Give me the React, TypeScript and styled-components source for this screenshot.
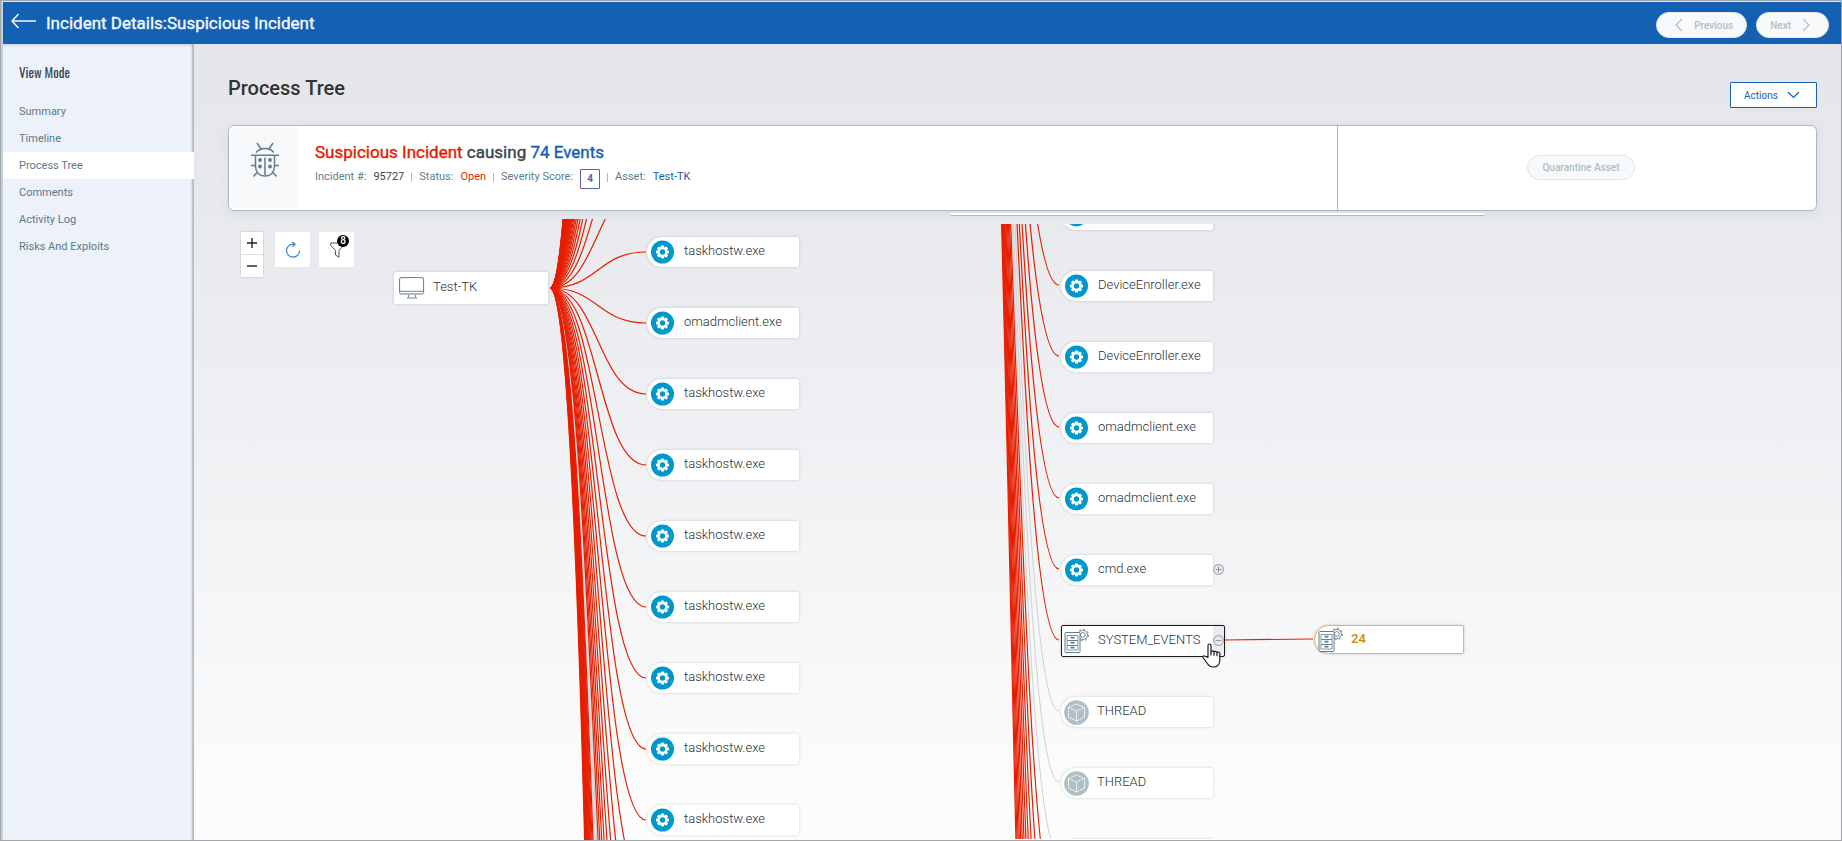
import React from 'react';
import styled, { createGlobalStyle, css } from 'styled-components';

const GlobalStyle = createGlobalStyle`
  *, *::before, *::after { box-sizing: border-box; }
  body { margin: 0; font-family: Roboto, "Liberation Sans", sans-serif; color: #37474f; }
  button { font: inherit; cursor: pointer; }
`;

const Page = styled.div`
  display: flex;
  flex-direction: column;
  height: 100vh;
  min-height: 640px;
  overflow: hidden;
  border: 1px solid #a3a5a9;
`;

const Frame = styled.div`
  display: flex;
  flex-direction: column;
  flex: 1;
  min-height: 0;
  border-top: 1px solid #dfe3ea;
  border-left: 2px solid #bcd3da;
`;

const Header = styled.header`
  display: flex;
  align-items: center;
  flex: none;
  height: 42px;
  padding: 0 12px 0 8px;
  background: #1460b2;
  color: #f2f6fb;
`;

const BackLink = styled.a`
  display: flex;
  margin: 0 9px 4px 0;
  color: inherit;
`;

const HeaderTitle = styled.h1`
  flex: 1;
  margin: 0;
  font-size: 17px;
  font-weight: 400;
  line-height: 24px;
  -webkit-text-stroke: 0.4px currentColor;
`;

const PagerButton = styled.button<{ $dir: 'prev' | 'next' }>`
  display: flex;
  align-items: center;
  gap: 11px;
  height: 26px;
  margin: 4px 0 0 9px;
  padding: ${(p) => (p.$dir === 'prev' ? '0 13px 0 18px' : '0 18px 0 13px')};
  border: 1px solid #e6eaed;
  border-radius: 13px;
  background: #f7f9fb;
  color: #b0bec5;
  font-size: 10px;
  font-weight: 500;
`;

const Body = styled.div`
  display: flex;
  flex: 1;
  min-height: 0;
`;

const Sidebar = styled.nav`
  flex: none;
  width: 191px;
  padding-top: 19px;
  background: #ecf1fa;
  box-shadow: inset -3px 0 2px -1px rgba(60, 80, 95, 0.35), inset 0 3px 3px -2px rgba(60, 80, 95, 0.2);
`;

const SidebarHeading = styled.h2`
  margin: 0 0 17px 16px;
  font-family: Oswald, "Roboto Condensed", "Liberation Sans Narrow", Roboto, sans-serif;
  font-size: 13px;
  font-weight: 400;
  line-height: 18px;
  color: #37474f;
`;

const SidebarLink = styled.a<{ $active?: boolean }>`
  display: block;
  padding-left: 16px;
  background: ${(p) => (p.$active ? '#fff' : 'transparent')};
  color: #5d7986;
  font-size: 11px;
  line-height: 27px;
  text-decoration: none;
`;

const Main = styled.main`
  display: flex;
  flex-direction: column;
  flex: 1;
  min-width: 0;
  padding: 28px 24px 0 34px;
  background: linear-gradient(#e5e6eb 0%, #e8e9ed 20%, #f2f3f5 60%, #fcfcfc 95%);
`;

const TitleRow = styled.div`
  display: flex;
  align-items: flex-start;
  justify-content: space-between;
  flex: none;
  height: 53px;
`;

const PageTitle = styled.h2`
  margin: 4px 0 0;
  font-size: 20px;
  font-weight: 500;
  line-height: 24px;
  color: #333;
`;

const ActionsButton = styled.button`
  display: flex;
  align-items: center;
  justify-content: space-between;
  width: 87px;
  height: 26px;
  margin-top: 10px;
  padding: 0 16px 0 13px;
  border: 1px solid #1460b2;
  border-radius: 1px;
  background: #fff;
  color: #1460b2;
  font-size: 10px;
`;

const Card = styled.section`
  display: flex;
  flex: none;
  height: 86px;
  border: 1px solid #a9bac4;
  border-radius: 6px;
  background: #fff;
  box-shadow: 0 3px 10px rgba(120, 150, 165, 0.16);
`;

const CardIcon = styled.div`
  display: flex;
  justify-content: center;
  width: 67px;
  margin: 1px 0 2px 2px;
  padding-top: 15px;
  border-radius: 6px 0 0 6px;
  background: #f6f8fa;
`;

const CardText = styled.div`
  flex: 1;
  padding: 16px 0 0 17px;
`;

const CardTitle = styled.h3`
  margin: 0;
  font-size: 17px;
  font-weight: 400;
  line-height: 20px;
  color: #37474f;
  -webkit-text-stroke: 0.4px currentColor;
`;

const Tone = styled.span<{ $color: string }>`
  color: ${(p) => p.$color};
  -webkit-text-stroke-color: ${(p) => p.$color};
`;

const Facts = styled.dl`
  display: flex;
  margin: 6px 0 0;
  font-size: 11px;
  line-height: 18px;
`;

const Fact = styled.div`
  display: flex;
  gap: 7px;
  & + &::before {
    content: '';
    width: 1px;
    height: 9px;
    margin: 5px 0 0 7px;
    background: #a9bac4;
  }
`;

const Term = styled.dt`
  color: #607d8b;
`;

const Value = styled.dd<{ $color?: string }>`
  margin: 0;
  color: ${(p) => p.$color ?? '#37474f'};
`;

const Score = styled.dd`
  width: 20px;
  height: 20px;
  margin: 1px 0 0;
  border: 1px solid #5b5bb8;
  border-radius: 1px;
  color: #5b5bb8;
  font-size: 10px;
  font-weight: 700;
  text-align: center;
`;

const CardActions = styled.div`
  display: flex;
  align-items: center;
  justify-content: center;
  flex: none;
  width: 479px;
  max-width: 40%;
  padding: 0 0 2px 8px;
  border-left: 1px solid #a9bac4;
`;

const QuarantineButton = styled.button`
  height: 25px;
  padding: 0 14px;
  border: 1px solid #e0e6e9;
  border-radius: 13px;
  background: #f7f9fa;
  color: #b0bec5;
  font-size: 10px;
  font-weight: 500;
`;

const Canvas = styled.div`
  display: grid;
  grid-template-columns: 723fr 533fr 333fr;
  flex: 1;
  min-height: 0;
`;

const TreePane = styled.section`
  position: relative;
  flex: 1;
  min-width: 0;
  margin-top: 8px;
  overflow: hidden;
`;

const SplitPane = styled.div`
  display: flex;
  flex-direction: column;
  min-width: 0;
  margin-top: 2px;
  border-top: 2px solid #fff;
  border-bottom: 1px solid #fff;
  background: linear-gradient(#e3e7eb 0, #e9eaed 10px, transparent 40px);
`;

const SplitEdge = styled.div`
  height: 1px;
  background: #a9bac4;
`;

const Links = styled.svg`
  position: absolute;
  inset: 0;
  width: 100%;
  height: 100%;
  fill: none;
`;

const Toolbar = styled.div`
  position: absolute;
  top: 13px;
  left: 13px;
  display: flex;
  align-items: flex-start;
`;

const ZoomGroup = styled.div`
  display: flex;
  flex-direction: column;
  gap: 1px;
  width: 22px;
  margin-right: 12px;
  background: #dcdde0;
  box-shadow: 0 0 2px rgba(0, 0, 0, 0.25);
`;

const ZoomButton = styled.button`
  display: flex;
  align-items: center;
  justify-content: center;
  height: 22px;
  padding: 0;
  border: 0;
  background: #fff;
`;

const ToolButton = styled.button`
  position: relative;
  display: flex;
  align-items: center;
  justify-content: center;
  width: 35px;
  height: 35px;
  margin-right: 9px;
  padding: 0;
  border: 0;
  border-radius: 2px;
  background: #fff;
`;

const CountBadge = styled.span`
  position: absolute;
  top: 3px;
  right: 5px;
  width: 12px;
  height: 12px;
  border-radius: 6px;
  background: #000;
  color: #fff;
  font-size: 10px;
  font-weight: 500;
  line-height: 12px;
  text-align: center;
`;

type Kind = 'host' | 'process' | 'system' | 'thread' | 'group';

const Node = styled.div<{ $x: number; $y: number; $kind: Kind }>`
  position: absolute;
  left: ${(p) => p.$x}px;
  top: ${(p) => p.$y}px;
  display: flex;
  align-items: center;
  gap: ${(p) => (p.$kind === 'process' ? 10 : 8)}px;
  width: 152px;
  height: 30px;
  padding-left: ${(p) => (p.$kind === 'thread' ? 3 : 4)}px;
  border-radius: 15px 2px 2px 15px;
  background: #fff;
  box-shadow: 0 0 3px rgba(0, 0, 0, 0.18);
  font-size: 13px;
  font-weight: 300;
  line-height: 18px;
  color: #263238;
  ${(p) =>
    p.$kind === 'host' &&
    css`
      width: 154px;
      height: 32px;
      padding-left: 5px;
      border-radius: 2px;
    `}
  ${(p) =>
    p.$kind === 'system' &&
    css`
      width: 164px;
      height: 32px;
      padding-left: 2px;
      border: 1px solid #1b1b1b;
      border-radius: 2px;
      background: linear-gradient(to right, #fff 151px, #ebecf1 151px);
    `}
  ${(p) =>
    p.$kind === 'group' &&
    css`
      width: 150px;
      height: 29px;
      padding-left: 3px;
      gap: 7px;
      border: 1px solid #e2b468;
      color: #d4860b;
      font-weight: 500;
    `}
`;

const NodeLabel = styled.span`
  padding-bottom: 2px;
`;

const Toggle = styled.button<{ $x: number; $y: number }>`
  position: absolute;
  left: ${(p) => p.$x}px;
  top: ${(p) => p.$y}px;
  display: flex;
  width: 11px;
  height: 11px;
  padding: 0;
  border: 0;
  background: #e9eaf0;
`;

const Pointer = styled.svg<{ $x: number; $y: number }>`
  position: absolute;
  left: ${(p) => p.$x}px;
  top: ${(p) => p.$y}px;
`;

const BackArrow = () => (
  <svg width="26" height="16" viewBox="0 0 26 16" fill="none" stroke="currentColor" strokeWidth="1.6">
    <path d="M7.5 1 1 8l6.500 7M1 8h24" />
  </svg>
);

const Chevron = ({ dir }: { dir: 'left' | 'right' | 'down' }) => {
  const d = { left: 'M7 1 1 7l6 6', right: 'M1 1l6 6-6 6', down: 'M1 1l5.500 5.500L12 1' }[dir];
  const down = dir === 'down';
  return (
    <svg width={down ? 13 : 8} height={down ? 8 : 14} fill="none" stroke="currentColor" strokeWidth="1.200">
      <path d={d} />
    </svg>
  );
};

const BugIcon = () => (
  <svg width="28" height="36" viewBox="0 0 28 36" fill="none" stroke="#607d8b" strokeWidth="1.500">
    <path d="M6 1l4 6M22 1l-4 6M5 10.500C8 7.500 10 6.500 14 6.500s6 1 9 4M0 13.200h28M4.500 13.500V24c0 6 3.500 10 9.500 10s9.500-4 9.500-10V13.500M14 15.500V33M0 23.500h4.500M23.500 23.500H28M7 29.500 2.500 34.500M21 29.500l4.500 5" />
    <g fill="#607d8b" stroke="none">
      <circle cx="9" cy="18" r="1.900" /><circle cx="19" cy="18" r="1.900" />
      <circle cx="9" cy="24.500" r="1.900" /><circle cx="19" cy="24.500" r="1.900" />
    </g>
  </svg>
);

const MonitorIcon = () => (
  <svg width="26" height="22" viewBox="0 0 26 22" fill="none" stroke="#607d8b">
    <rect x=".6" y=".6" width="24" height="16.400" rx="1.500" />
    <path d="M.6 14.300h24M10 17.500l-1 3.500M16 17.500l1 3.500M8 21h10" strokeWidth=".9" />
  </svg>
);

const gearTeeth = [0, 45, 90, 135, 180, 225, 270, 315];

const GearIcon = () => (
  <svg width="23" height="24" viewBox="0 0 23 24">
    <circle cx="11.500" cy="12" r="11.500" fill="#0097ca" />
    <g fill="#fff">
      {gearTeeth.map((a) => (
        <rect key={a} x="9.900" y="5.500" width="3.200" height="3" rx=".7" transform={`rotate(${a} 11.500 12)`} />
      ))}
    </g>
    <circle cx="11.500" cy="12" r="3.800" fill="none" stroke="#fff" strokeWidth="2.200" />
  </svg>
);

const CubeIcon = () => (
  <svg width="25" height="25" viewBox="0 0 25 25" fill="none">
    <circle cx="12.500" cy="12.500" r="12.300" fill="#b0bec5" />
    <path
      d="M12.500 4 20.500 7.500v9.500L12.500 21 4.500 17V7.500zM4.500 7.500l8 3.500 8-3.500M12.500 11v10"
      stroke="#fff"
      strokeDasharray="2 .7"
    />
  </svg>
);

const CabinetIcon = () => (
  <svg width="26" height="26" viewBox="0 0 26 26" fill="none" stroke="#607d8b">
    <g strokeWidth=".9">
      <circle cx="18.800" cy="7" r="4.600" />
      <circle cx="18.800" cy="7" r="2.400" />
      <circle cx="18.800" cy="7" r="5.700" strokeDasharray="2.200 2.200" />
    </g>
    <rect x="1" y="4.500" width="15" height="20" rx="1" fill="#fff" />
    <path d="M3 7.500h11v5H3zM3 12.500h11v5H3zM3 17.500h11v4.500H3zM3 24.500v1M14 24.500v1" strokeWidth=".8" />
    <path d="M6.500 9.700h4M6.500 14.700h4M6.500 19.600h4" strokeWidth="1.800" />
  </svg>
);

const RefreshIcon = () => (
  <svg width="16" height="17" viewBox="0 0 16 17" fill="none" stroke="#3a7fcb" strokeWidth="1.200">
    <path d="M9.500 3.200H8A6.500 6.500 0 1 0 14.500 9.500M7 .6l3 2.600-2.600 2.600" />
  </svg>
);

const FunnelIcon = () => (
  <svg width="14" height="16" viewBox="0 0 14 16" fill="none" stroke="#455a64">
    <path d="M.7 1h12.600v2.500L9 8.500v6.800L5.500 13V8.500L.7 3.500z" />
  </svg>
);

const ToggleIcon = ({ open }: { open?: boolean }) => (
  <svg width="11" height="11" viewBox="0 0 11 11" fill="none" stroke="#8d8f96" strokeWidth=".9">
    <circle cx="5.500" cy="5.500" r="4.900" />
    <path d={open ? 'M2.500 5.500h6' : 'M2.500 5.500h6M5.500 2.500v6'} />
  </svg>
);

const NodeIcon = ({ kind }: { kind: Kind }) => {
  if (kind === 'host') return <MonitorIcon />;
  if (kind === 'thread') return <CubeIcon />;
  if (kind === 'process') return <GearIcon />;
  return <CabinetIcon />;
};

const TreeNode = ({ kind, x, y, name }: { kind: Kind; x: number; y: number; name?: string }) => (
  <Node $kind={kind} $x={x} $y={y}>
    <NodeIcon kind={kind} />
    {name && <NodeLabel>{name}</NodeLabel>}
  </Node>
);

const ROW = 71;
const SPAN = 96;
const FIRST_GREY = 16;
const LAST_GREY = 18;

const Fan = ({ x, y, up, down }: { x: number; y: number; up: number; down: number }) => {
  const rows = Array.from({ length: up + down }, (_, i) => i - up);
  const isGrey = (r: number) => r >= FIRST_GREY && r <= LAST_GREY;
  const half = SPAN / 2;
  return (
    <>
      {[true, false].map((grey) =>
        rows
          .filter((r) => isGrey(r) === grey)
          .map((r) => {
            const end = y + ROW * r + 35;
            return (
              <path
                key={r}
                d={`M${x} ${y}C${x + half} ${y} ${x + half} ${end} ${x + SPAN} ${end}`}
                stroke={grey ? '#cfd1d4' : '#e61e00'}
                strokeWidth={grey ? 1 : 1.2}
              />
            );
          }),
      )}
    </>
  );
};

const leftNames = [
  'taskhostw.exe', 'omadmclient.exe', 'taskhostw.exe', 'taskhostw.exe', 'taskhostw.exe',
  'taskhostw.exe', 'taskhostw.exe', 'taskhostw.exe', 'taskhostw.exe',
];

const rightNodes: { name?: string; kind: Kind }[] = [
  { kind: 'process' },
  { name: 'DeviceEnroller.exe', kind: 'process' },
  { name: 'DeviceEnroller.exe', kind: 'process' },
  { name: 'omadmclient.exe', kind: 'process' },
  { name: 'omadmclient.exe', kind: 'process' },
  { name: 'cmd.exe', kind: 'process' },
  { name: 'SYSTEM_EVENTS', kind: 'system' },
  { name: 'THREAD', kind: 'thread' },
  { name: 'THREAD', kind: 'thread' },
  { kind: 'thread' },
];

const links = ['Summary', 'Timeline', 'Process Tree', 'Comments', 'Activity Log', 'Risks And Exploits'];

export default function App() {
  return (
    <Page>
      <GlobalStyle />
      <Frame>
        <Header>
          <BackLink href="#" aria-label="Back"><BackArrow /></BackLink>
          <HeaderTitle>Incident Details:Suspicious Incident</HeaderTitle>
          <PagerButton type="button" $dir="prev"><Chevron dir="left" />Previous</PagerButton>
          <PagerButton type="button" $dir="next">Next<Chevron dir="right" /></PagerButton>
        </Header>
        <Body>
          <Sidebar>
            <SidebarHeading>View Mode</SidebarHeading>
            {links.map((l) => (
              <SidebarLink key={l} href="#" $active={l === 'Process Tree'}>{l}</SidebarLink>
            ))}
          </Sidebar>
          <Main>
            <TitleRow>
              <PageTitle>Process Tree</PageTitle>
              <ActionsButton type="button">Actions<Chevron dir="down" /></ActionsButton>
            </TitleRow>
            <Card>
              <CardIcon><BugIcon /></CardIcon>
              <CardText>
                <CardTitle>
                  <Tone $color="#e61e00">Suspicious Incident</Tone> causing <Tone $color="#1460b2">74 Events</Tone>
                </CardTitle>
                <Facts>
                  <Fact><Term>Incident #:</Term><Value>95727</Value></Fact>
                  <Fact><Term>Status:</Term><Value $color="#e61e00">Open</Value></Fact>
                  <Fact><Term>Severity Score:</Term><Score>4</Score></Fact>
                  <Fact><Term>Asset:</Term><Value $color="#1460b2">Test-TK</Value></Fact>
                </Facts>
              </CardText>
              <CardActions>
                <QuarantineButton type="button">Quarantine Asset</QuarantineButton>
              </CardActions>
            </Card>
            <Canvas>
              <TreePane>
                <Links><Fan x={322} y={69} up={35} down={32} /></Links>
                <TreeNode kind="host" x={166} y={53} name="Test-TK" />
                {leftNames.map((name, i) => (
                  <TreeNode key={i} kind="process" x={419} y={18 + ROW * i} name={name} />
                ))}
                <Toolbar>
                  <ZoomGroup>
                    <ZoomButton type="button" aria-label="Zoom in">
                      <svg width="10" height="10" stroke="#222" strokeWidth="1.400"><path d="M0 5h10M5 0v10" /></svg>
                    </ZoomButton>
                    <ZoomButton type="button" aria-label="Zoom out">
                      <svg width="10" height="10" stroke="#222" strokeWidth="1.400"><path d="M0 5h10" /></svg>
                    </ZoomButton>
                  </ZoomGroup>
                  <ToolButton type="button" aria-label="Refresh"><RefreshIcon /></ToolButton>
                  <ToolButton type="button" aria-label="Filter"><FunnelIcon /><CountBadge>8</CountBadge></ToolButton>
                </Toolbar>
              </TreePane>
              <SplitPane>
                <SplitEdge />
                <TreePane as="div">
                  <Links>
                    <Fan x={12} y={-684} up={0} down={31} />
                    <path d="M274 416 362 415" stroke="#e61e00" strokeWidth="1.200" />
                  </Links>
                  {rightNodes.map((n, i) => (
                    <TreeNode
                      key={i}
                      kind={n.kind}
                      x={110}
                      y={-24 + ROW * i - (n.kind === 'system' ? 1 : 0)}
                      name={n.name}
                    />
                  ))}
                  <Toggle type="button" aria-label="Expand" $x={262} $y={340}><ToggleIcon /></Toggle>
                  <Toggle type="button" aria-label="Collapse" $x={262} $y={411}><ToggleIcon open /></Toggle>
                  <TreeNode kind="group" x={363} y={401} name="24" />
                  <Pointer $x={251} $y={419} width="20" height="25" viewBox="0 0 20 25" fill="#fff" stroke="#1c1c2b" strokeWidth="1.200" strokeLinejoin="round">
                    <path d="M6 14.500V2.500C6 .5 9 .5 9 2.500V9c0-1.500 3-1.500 3 .3 0-1.500 3-1.300 3 .5 0-1.300 2.800-1 2.800.8V17c0 4-2.300 7-6.300 7-3.500 0-5-1.500-6.500-4L1 14.500c-.6-1.300 1-2.300 2.200-1.300z" />
                    <path d="M9 8.500v4M12 9.300v3.500M15 9.800v3.500" />
                  </Pointer>
                </TreePane>
              </SplitPane>
            </Canvas>
          </Main>
        </Body>
      </Frame>
    </Page>
  );
}
